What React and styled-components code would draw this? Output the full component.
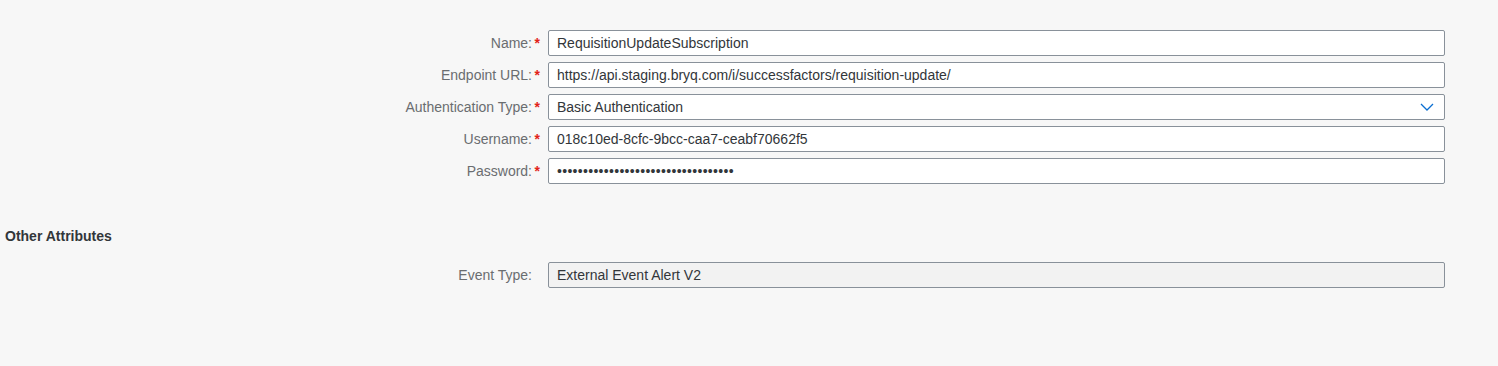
import React from "react";
import styled, { createGlobalStyle } from "styled-components";

const Global = createGlobalStyle`
  html, body { margin: 0; padding: 0; background: #f7f7f7; }
  body { font-family: "Liberation Sans", Arial, sans-serif; }
`;

const Page = styled.div`
  background: #f7f7f7;
  min-height: 366px;
  padding: 30px 53px 0 0;
  box-sizing: border-box;
`;

const Rows = styled.div`
  display: flex;
  flex-direction: column;
  gap: 6px;
`;

const Row = styled.div`
  display: flex;
  align-items: center;
  height: 26px;
`;

const Label = styled.label`
  width: 532px;
  flex: none;
  text-align: right;
  font-size: 14px;
  color: #6a6d70;
  white-space: nowrap;
`;

const Marker = styled.span`
  width: 8px;
  flex: none;
  margin-right: 8px;
  color: #e2231a;
  font-size: 14px;
  font-weight: bold;
  text-align: right;
`;

const Field = styled.div`
  flex: 1;
  height: 26px;
  box-sizing: border-box;
  border: 1px solid #89919a;
  border-radius: 2px;
  background: ${(p) => (p.$readOnly ? "#f2f2f2" : "#ffffff")};
  display: flex;
  align-items: center;
  padding: 0 8px;
  font-size: 14px;
  color: #32363a;
  white-space: nowrap;
  overflow: hidden;
`;

const Value = styled.span`
  flex: 1;
  letter-spacing: ${(p) => (p.$dots ? "0.3px" : "normal")};
`;

const Chevron = styled.svg`
  width: 14px;
  height: 8px;
  margin-right: 2px;
  flex: none;
`;

const SectionTitle = styled.h3`
  margin: 43px 0 0 5px;
  height: 18px;
  line-height: 18px;
  font-size: 14px;
  font-weight: bold;
  color: #32363a;
`;

const Section = styled.div`
  margin-top: 17px;
`;

function FormRow({ label, required, children }) {
  return (
    <Row>
      <Label>{label}</Label>
      <Marker>{required ? "*" : ""}</Marker>
      {children}
    </Row>
  );
}

export default function App() {
  return (
    <>
      <Global />
      <Page>
        <Rows>
          <FormRow label="Name:" required>
            <Field><Value>RequisitionUpdateSubscription</Value></Field>
          </FormRow>
          <FormRow label="Endpoint URL:" required>
            <Field><Value>https://api.staging.bryq.com/i/successfactors/requisition-update/</Value></Field>
          </FormRow>
          <FormRow label="Authentication Type:" required>
            <Field>
              <Value>Basic Authentication</Value>
              <Chevron viewBox="0 0 14 8">
                <path d="M1 1 L7 7 L13 1" fill="none" stroke="#0a6ed1" strokeWidth="1.3" />
              </Chevron>
            </Field>
          </FormRow>
          <FormRow label="Username:" required>
            <Field><Value>018c10ed-8cfc-9bcc-caa7-ceabf70662f5</Value></Field>
          </FormRow>
          <FormRow label="Password:" required>
            <Field><Value $dots>{"•".repeat(34)}</Value></Field>
          </FormRow>
        </Rows>
        <SectionTitle>Other Attributes</SectionTitle>
        <Section>
          <FormRow label="Event Type:">
            <Field $readOnly><Value>External Event Alert V2</Value></Field>
          </FormRow>
        </Section>
      </Page>
    </>
  );
}
